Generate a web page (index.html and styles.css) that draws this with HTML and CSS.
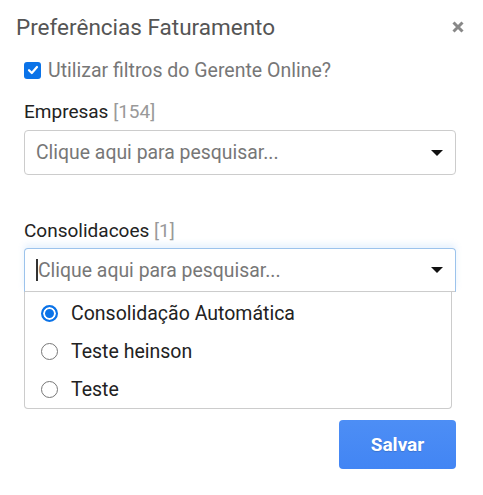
FILE: index.html
```html
<!DOCTYPE html>
<html>
<head>
<meta charset="utf-8">
<link rel="stylesheet" href="styles.css">
</head>
<body>
<div class="modal">
  <div class="header">
    <h1 class="title">Preferências Faturamento</h1>
    <svg class="close" width="12" height="12" viewBox="0 0 12 12"><path d="M1.5 1.5 L10.5 10.5 M10.5 1.5 L1.5 10.5" stroke="#888" stroke-width="3" stroke-linecap="butt"/></svg>
  </div>
  <label class="check-row">
    <span class="checkbox"><svg width="12" height="12" viewBox="0 0 12 12"><path d="M2 6.2 L4.8 9 L10 3" fill="none" stroke="#fff" stroke-width="2.2" stroke-linecap="round" stroke-linejoin="round"/></svg></span>
    <span class="check-text">Utilizar filtros do Gerente Online?</span>
  </label>
  <div class="field">
    <div class="label">Empresas <span class="count">[154]</span></div>
    <div class="select">
      <span class="placeholder">Clique aqui para pesquisar...</span>
      <span class="caret"></span>
    </div>
  </div>
  <div class="field field-2">
    <div class="label">Consolidacoes <span class="count">[1]</span></div>
    <div class="select focused">
      <span class="cursor"></span><span class="placeholder">Clique aqui para pesquisar...</span>
      <span class="caret"></span>
    </div>
    <ul class="options">
      <li class="option"><span class="radio checked"></span>Consolidação Automática</li>
      <li class="option"><span class="radio"></span>Teste heinson</li>
      <li class="option"><span class="radio"></span>Teste</li>
    </ul>
  </div>
  <div class="footer">
    <button class="btn">Salvar</button>
  </div>
</div>
</body>
</html>
```
FILE: styles.css
```css
* { box-sizing: border-box; }
html, body { margin: 0; padding: 0; background: #fff; }
body { font-family: Roboto, "Noto Sans", Arial, sans-serif; width: 483px; height: 495px; overflow: hidden; }
.modal { padding: 0 27px 0 24px; }
.header { display: flex; align-items: center; justify-content: space-between; height: 54px; margin-left: -8px; margin-right: -8px; }
.title { margin: 0; font-size: 22.5px; font-weight: 400; color: #555; letter-spacing: 0; }
.close { display: block; }
.check-row { display: flex; align-items: center; height: 32px; }
.checkbox { width: 17px; height: 17px; border-radius: 3px; background: #0b73e8; display: flex; align-items: center; justify-content: center; margin-right: 7px; }
.check-text { font-size: 19.5px; color: #777; }
.field { margin-top: 11px; }
.label { font-size: 19px; color: #222; height: 30px; line-height: 30px; }
.count { color: #999; }
.field .label { margin-bottom: 3px; }
.select { height: 45px; border: 1px solid #ccc; border-radius: 4px; display: flex; align-items: center; padding: 0 12px 0 11px; position: relative; }
.placeholder { font-size: 19.4px; color: #777; flex: 1; }
.caret { width: 0; height: 0; border-left: 6px solid transparent; border-right: 6px solid transparent; border-top: 6px solid #111; }
.field-2 { margin-top: 41px; }
.field-2 .label { margin-bottom: 2px; }
.select.focused { height: 44px; border-color: #9cc3ec; border-bottom-color: #ccc; border-radius: 4px 4px 0 0; box-shadow: 0 -4px 6px rgba(100, 170, 240, 0.15); }
.cursor { width: 2px; height: 22px; background: #333; margin-right: 0; }
.options { list-style: none; margin: 0; padding: 2px 0 4px; border: 1px solid #ccc; border-top: none; border-radius: 0 0 4px 4px; margin-right: 4px; height: 117px; }
.option { display: flex; align-items: center; height: 38px; font-size: 19.5px; color: #222; padding-left: 16px; }
.radio { width: 17px; height: 17px; border-radius: 50%; border: 1px solid #777; margin-right: 13px; flex: none; }
.radio.checked { border: 2px solid #0b73e8; background: #0b73e8; box-shadow: inset 0 0 0 2px #fff; }
.footer { display: flex; justify-content: flex-end; margin-top: 11px; }
.btn { width: 117px; height: 49px; border: none; border-radius: 4px; background: linear-gradient(#4d8ef5, #4285f4); color: #fff; font-family: Roboto, Arial, sans-serif; font-size: 19px; font-weight: 700; text-shadow: 0 1px 1px rgba(0,0,0,0.15); }
```
